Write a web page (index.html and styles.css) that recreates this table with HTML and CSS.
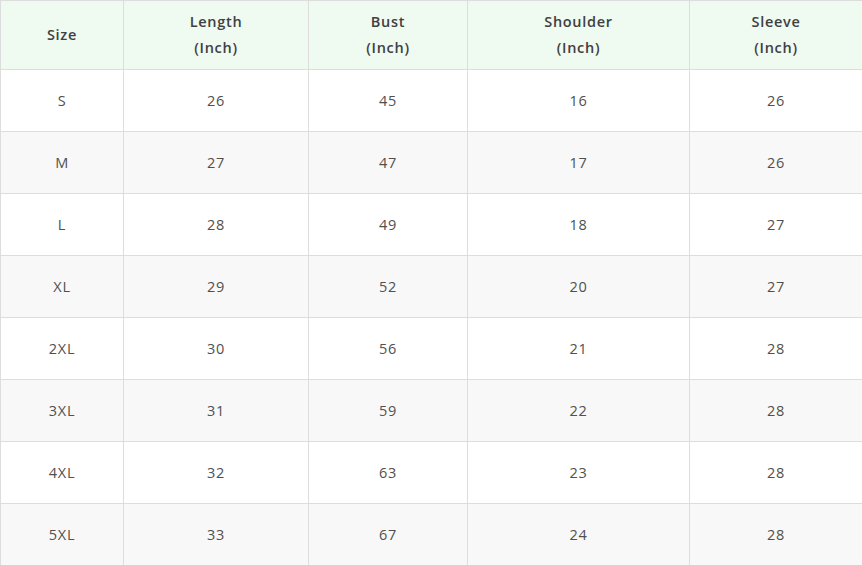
FILE: index.html
```html
<!DOCTYPE html>
<html>
<head>
<meta charset="utf-8">
<link rel="stylesheet" href="styles.css">
</head>
<body>
<table class="size-table">
  <colgroup>
    <col class="c1"><col class="c2"><col class="c3"><col class="c4"><col class="c5">
  </colgroup>
  <thead>
    <tr>
      <th>Size</th>
      <th>Length<br>(Inch)</th>
      <th>Bust<br>(Inch)</th>
      <th>Shoulder<br>(Inch)</th>
      <th>Sleeve<br>(Inch)</th>
    </tr>
  </thead>
  <tbody>
    <tr><td>S</td><td>26</td><td>45</td><td>16</td><td>26</td></tr>
    <tr><td>M</td><td>27</td><td>47</td><td>17</td><td>26</td></tr>
    <tr><td>L</td><td>28</td><td>49</td><td>18</td><td>27</td></tr>
    <tr><td>XL</td><td>29</td><td>52</td><td>20</td><td>27</td></tr>
    <tr><td>2XL</td><td>30</td><td>56</td><td>21</td><td>28</td></tr>
    <tr><td>3XL</td><td>31</td><td>59</td><td>22</td><td>28</td></tr>
    <tr><td>4XL</td><td>32</td><td>63</td><td>23</td><td>28</td></tr>
    <tr><td>5XL</td><td>33</td><td>67</td><td>24</td><td>28</td></tr>
  </tbody>
</table>
</body>
</html>
```
FILE: styles.css
```css
html, body {
  margin: 0;
  padding: 0;
  background: #ffffff;
}
.size-table {
  width: 862px;
  border-collapse: collapse;
  table-layout: fixed;
  font-family: "Open Sans", "DejaVu Sans", sans-serif;
  font-size: 14.5px;
  letter-spacing: 0.7px;
  color: #505050;
}
.c1 { width: 123px; }
.c2 { width: 185px; }
.c3 { width: 159px; }
.c4 { width: 222px; }
.c5 { width: 173px; }
.size-table th,
.size-table td {
  border: 1px solid #dddddd;
  text-align: center;
  vertical-align: middle;
  padding: 0;
}
.size-table th {
  background: #effaf0;
  color: #404040;
  font-weight: 600;
  line-height: 26px;
  height: 68px;
}
.size-table td {
  height: 61px;
  line-height: 20px;
}
.size-table tbody tr:nth-child(even) td {
  background: #f8f8f8;
}
```
